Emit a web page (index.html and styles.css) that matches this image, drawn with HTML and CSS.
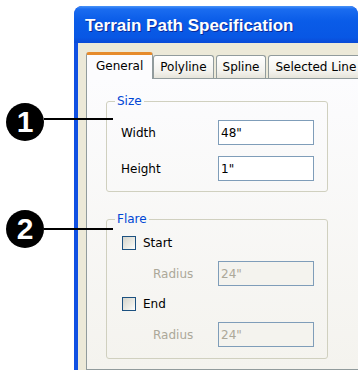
FILE: index.html
```html
<!DOCTYPE html>
<html>
<head>
    <title>Terrain Path Specification</title>
    <link rel="stylesheet" href="styles.css">
</head>
<body>
    <div class="window">
        <div class="titlebar">Terrain Path Specification</div>
        <div class="client">
            <div class="tabs">
                <div class="tab active">General</div>
                <div class="tab">Polyline</div>
                <div class="tab">Spline</div>
                <div class="tab">Selected Line</div>
            </div>
            <div class="panel">
                <fieldset class="group">
                    <legend>Size</legend>
                    <div class="rows size-rows">
                        <div class="row">
                            <span class="label">Width</span>
                            <input type="text" class="field" value="48&quot;">
                        </div>
                        <div class="row">
                            <span class="label">Height</span>
                            <input type="text" class="field" value="1&quot;">
                        </div>
                    </div>
                </fieldset>
                <fieldset class="group flare">
                    <legend>Flare</legend>
                    <div class="rows flare-rows">
                        <div class="row check-row">
                            <span class="checkbox"></span>
                            <span>Start</span>
                        </div>
                        <div class="row">
                            <span class="label sub disabled">Radius</span>
                            <input type="text" class="field" value="24&quot;" disabled>
                        </div>
                        <div class="row check-row">
                            <span class="checkbox"></span>
                            <span>End</span>
                        </div>
                        <div class="row">
                            <span class="label sub disabled">Radius</span>
                            <input type="text" class="field" value="24&quot;" disabled>
                        </div>
                    </div>
                </fieldset>
            </div>
        </div>
    </div>

    <!-- numbered callouts over the dialog -->
    <div class="callout callout-one">
        <span class="bullet">1</span>
        <span class="lead"></span>
    </div>
    <div class="callout callout-two">
        <span class="bullet">2</span>
        <span class="lead"></span>
    </div>
</body>
</html>
```

FILE: styles.css
```css
body {
    margin: 0;
    background-color: #fff;
    font-family: 'DejaVu Sans', sans-serif;
    font-size: 12px;
    color: #000;
    height: 370px;
    overflow: hidden;
    position: relative;
}

.window {
    margin: 6px 0 0 74px;
    width: 280px;
    height: 364px;
    padding-left: 4px;
    background-color: #1050e2;
    border-radius: 8px 8px 0 0;
    display: flex;
    flex-direction: column;
    overflow: hidden;
}

.titlebar {
    margin-left: -4px;
    height: 37px;
    box-sizing: border-box;
    padding: 3px 0 0 11px;
    display: flex;
    align-items: center;
    border-radius: 8px 8px 0 0;
    background: linear-gradient(#4a94f8 0, #1a6cf0 3px, #0a5ce8 40%, #0857e4 85%, #0a4ad6 100%);
    color: #fff;
    font-family: 'Liberation Sans', sans-serif;
    font-weight: bold;
    font-size: 17px;
    text-shadow: 1px 1px 0 #0a2a9a;
    white-space: nowrap;
}

.client {
    flex: 1;
    min-width: 0;
    background-color: #ece9d8;
    padding: 9px 0 0 8px;
    display: flex;
    flex-direction: column;
    overflow: hidden;
}

.tabs {
    display: flex;
    align-items: flex-end;
    height: 27px;
    position: relative;
    z-index: 1;
}

.tab {
    flex-shrink: 0;
    height: 23px;
    box-sizing: border-box;
    margin: 0 0 1px 2px;
    padding: 0 6px;
    display: flex;
    align-items: center;
    border: 1px solid #919b9c;
    border-bottom: none;
    border-radius: 3px 3px 0 0;
    background: linear-gradient(#fff, #f3f2ed 70%, #e6e4da);
    white-space: nowrap;
}

.tab.active {
    height: 27px;
    margin: 0;
    padding: 0 9px 3px;
    border-top: 3px solid #e68b2c;
    background: #fcfcfe;
}

.tab.active + .tab {
    margin-left: 0;
}

.panel {
    flex: 1;
    margin-top: -1px;
    padding: 15px 0 0 19px;
    border: 1px solid #919b9c;
    border-right: none;
    background: linear-gradient(#fcfcfe, #f4f3ee);
}

.group {
    width: 222px;
    box-sizing: border-box;
    margin: 0;
    padding: 0 0 10px 14px;
    border: 1px solid #d0d0bf;
    border-radius: 3px;
}

.group.flare {
    margin-top: 20px;
    padding-bottom: 11px;
}

legend {
    color: #0046d5;
    line-height: 14px;
    padding: 0 2px;
    margin-left: -6px;
}

.rows {
    display: flex;
    flex-direction: column;
}

.size-rows {
    margin-top: 12px;
    gap: 11px;
}

.flare-rows {
    margin-top: 7px;
    gap: 8px;
}

.row {
    display: flex;
    align-items: center;
    height: 25px;
}

.check-row {
    height: 20px;
}

.label {
    width: 97px;
    box-sizing: border-box;
}

.label.sub {
    padding-left: 32px;
}

.disabled {
    color: #aca899;
}

.field {
    width: 96px;
    height: 25px;
    box-sizing: border-box;
    margin: 0;
    padding: 0 2px;
    border: 1px solid #7f9db9;
    background-color: #fff;
    font-family: 'DejaVu Sans', sans-serif;
    font-size: 12px;
    color: #000;
}

.field:disabled {
    background-color: #f4f3ee;
    color: #aca899;
}

.checkbox {
    width: 14px;
    height: 14px;
    box-sizing: border-box;
    margin: 0 7px 0 1px;
    border: 1px solid #1c5180;
    background: linear-gradient(135deg, #d4d4cc, #f0f0ea 70%, #fff);
}

.callout {
    position: absolute;
    left: 6px;
    display: flex;
    align-items: center;
}

.callout-one {
    top: 103px;
}

.callout-two {
    top: 210px;
}

.bullet {
    width: 38px;
    height: 38px;
    border-radius: 50%;
    background-color: #000;
    color: #fff;
    font-family: 'Liberation Sans', sans-serif;
    font-weight: bold;
    font-size: 30px;
    display: flex;
    align-items: center;
    justify-content: center;
}

.lead {
    width: 69px;
    height: 2px;
    background-color: #000;
}

.callout-one .lead {
    margin-bottom: 7px;
}
```
